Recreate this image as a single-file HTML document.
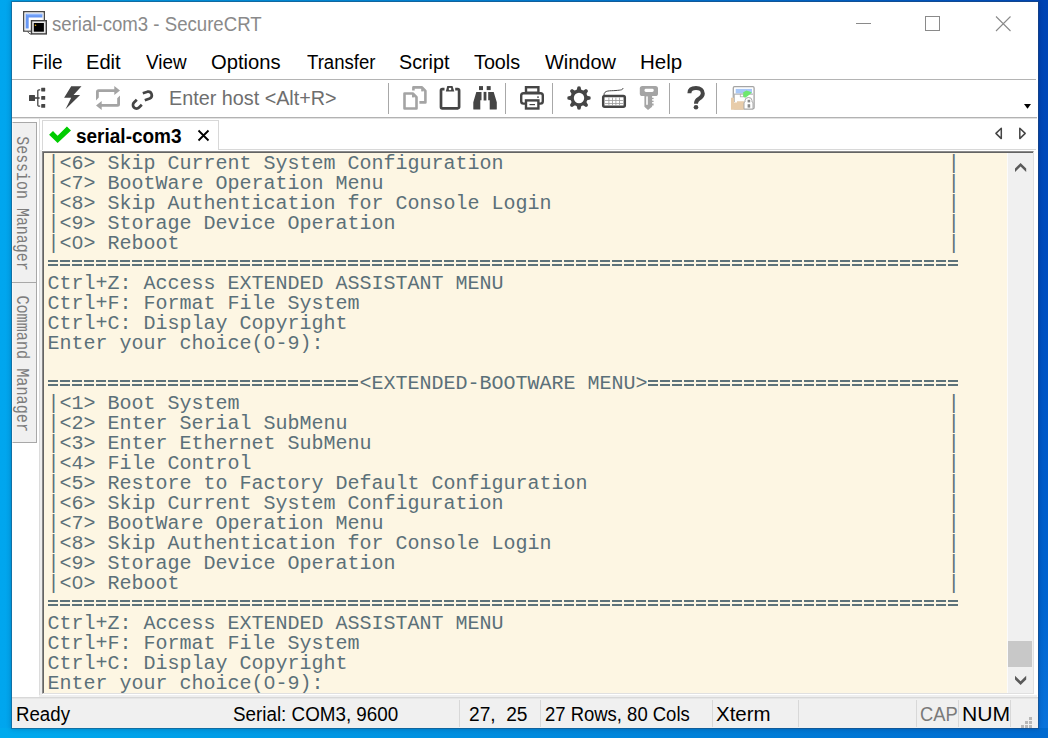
<!DOCTYPE html>
<html><head><meta charset="utf-8">
<style>
html,body{margin:0;padding:0;}
body{width:1048px;height:738px;position:relative;overflow:hidden;
 background:linear-gradient(90deg,#00a6ee 0px,#009ce8 150px,#008ade 450px,#0072d4 750px,#005ac8 950px,#004cbe 1048px);
 font-family:"Liberation Sans",sans-serif;}
.abs{position:absolute;}
#win{position:absolute;left:12px;top:2px;width:1026px;height:726px;background:#fff;overflow:hidden;}
.menu{position:absolute;top:49px;font-size:19px;color:#000;line-height:24px;white-space:nowrap;}
.sep{position:absolute;width:1px;background:#a0a0a0;}
.term{position:absolute;left:47.5px;font-family:"Liberation Mono",monospace;font-size:20px;line-height:20px;color:#5b7079;white-space:pre;}
.tx{position:absolute;line-height:30px;white-space:nowrap;transform-origin:0 0;}
.st{position:absolute;top:702px;font-size:19px;line-height:24px;color:#000;white-space:nowrap;}
.ssep{position:absolute;top:700px;width:1px;height:27px;background:#d8d8d8;}
</style></head>
<body>
<div class="abs" style="left:1038px;top:0;width:10px;height:738px;background:linear-gradient(180deg,#0044b4 0,#004cbe 250px,#0058c8 420px,#0064d0 600px,#0a74dc 738px)"></div>
<div id="desk-bottom" class="abs" style="left:0;top:728px;width:1048px;height:10px;background:linear-gradient(90deg,#00aaee,#0098e4 300px,#0080d8 700px,#006ad0 1048px)"></div>
<!-- window -->
<div class="abs" style="left:12px;top:2px;width:1026px;height:726px;background:#fff;box-shadow:0 0 0 1px rgba(40,70,100,0.42),0 0 5px 1px rgba(0,0,40,0.22);"></div>

<!-- title icon -->
<svg class="abs" style="left:0;top:0" width="60" height="40">
 <rect x="23.7" y="11.7" width="20.6" height="19.4" fill="#fff" stroke="#4a4a4a" stroke-width="1.4"/>
 <rect x="25" y="13" width="18" height="17" fill="none" stroke="#e0e0e0" stroke-width="0.8"/>
 <defs><linearGradient id="bl" x1="0" y1="0" x2="0" y2="1"><stop offset="0" stop-color="#8ab4ff"/><stop offset="1" stop-color="#5a8ef0"/></linearGradient></defs>
 <path d="M25.7 13.7 H42.4 V17.5 H28.7 V28.5 H25.7 Z" fill="#6898f4"/><rect x="26.5" y="14" width="15.5" height="1.2" fill="#90b8ff"/>
 <path d="M27 31.2 L30 34 H31.5" fill="none" stroke="#5a5a5a" stroke-width="1"/>
 <rect x="31.5" y="20.7" width="14.8" height="13.2" fill="#e8e8e8" stroke="#404040" stroke-width="1.4"/>
 <rect x="33.8" y="23" width="10.1" height="8.7" fill="#000"/>
 <circle cx="35.5" cy="25.3" r="0.8" fill="#f0b000"/>
</svg>
<!-- caption buttons -->
<div class="abs" style="left:856px;top:23px;width:15px;height:1px;background:#8a8a8a"></div>
<div class="abs" style="left:925px;top:16px;width:13px;height:13px;border:1px solid #8a8a8a"></div>
<svg class="abs" style="left:994px;top:15px" width="18" height="18"><path d="M2 1.5 L16.5 16 M16.5 1.5 L2 16" stroke="#8a8a8a" stroke-width="1.1"/></svg>

<!-- menu -->
<div class="abs" style="left:12px;top:79px;width:1024px;height:1px;background:#b4b4b4"></div>

<!-- toolbar -->
<svg class="abs" style="left:0;top:80px" width="1048" height="37" viewBox="0 80 1048 37">
 <!-- tree -->
 <g fill="#454545">
  <rect x="29" y="95" width="6" height="6" rx="0.5"/>
  <rect x="35" y="97.2" width="4.6" height="1.6"/>
  <path d="M40.2 89.8 H39 A1.2 1.2 0 0 0 37.8 91 V105 A1.2 1.2 0 0 0 39 106.2 H40.2" fill="none" stroke="#454545" stroke-width="1.3"/>
  <rect x="41.2" y="87.7" width="4" height="3.8" rx="0.4"/>
  <rect x="41.2" y="96" width="4" height="3.8" rx="0.4"/>
  <rect x="41.2" y="104" width="4" height="3.8" rx="0.4"/>
 </g>
 <!-- lightning -->
 <polygon points="71.2,86.3 81.5,86.3 73.5,94.9 80.1,94.9 65.5,109.2 71.2,97.7 64.1,97.7" fill="#454545"/>
 <!-- repeat -->
 <path d="M96 100.4 L98.8 97.6 V92 H114.3 V95 L120 90.5 L114.3 86.1 V89.2 H98.5 Q96 89.2 96 91.7 Z" fill="#a4a4a4"/>
 <path d="M120 95.4 L117.2 98.2 V104 H101.7 V101 L96 105.5 L101.7 109.9 V106.8 H117.5 Q120 106.8 120 104.3 Z" fill="#a4a4a4"/>
 <!-- broken link -->
 <g fill="none" stroke="#454545" stroke-width="2.7">
  <path d="M136.8 99.7 L134 102.5 A3.5 3.5 0 0 0 139 107.5 L141.8 104.7"/>
  <path d="M142.8 93.2 L147.5 91.7 A3.6 3.6 0 0 1 149.7 98.5 L144.8 100.3"/>
 </g>
 <!-- separators -->
 <rect x="388" y="83" width="1" height="31" fill="#a8a8a8"/>
 <rect x="505" y="83" width="1" height="31" fill="#a8a8a8"/>
 <rect x="552" y="83" width="1" height="31" fill="#a8a8a8"/>
 <rect x="669" y="83" width="1" height="31" fill="#a8a8a8"/>
 <rect x="716" y="83" width="1" height="31" fill="#a8a8a8"/>
 <!-- copy -->
 <g fill="none" stroke="#a4a4a4" stroke-width="2.6" stroke-linejoin="round">
  <path d="M413.4 90.4 V87.4 H422 L425.4 90.8 V102.4 H419.4"/>
  <path d="M404.5 93.5 H412.8 L416.5 97.2 V108.5 H404.5 Z"/>
 </g>
 <rect x="412" y="94" width="2.4" height="3.4" fill="#a4a4a4"/>
 <rect x="421.2" y="88" width="2.4" height="3.4" fill="#a4a4a4"/>
 <!-- clipboard -->
 <path d="M444.5 89.1 H442.3 A1.3 1.3 0 0 0 441 90.4 V107 A1.3 1.3 0 0 0 442.3 108.3 H457.8 A1.3 1.3 0 0 0 459.1 107 V90.4 A1.3 1.3 0 0 0 457.8 89.1 H455.2" fill="none" stroke="#454545" stroke-width="2.7"/>
 <polygon points="447.3,86.1 452.5,86.1 454.3,91.6 445.8,91.6" fill="#454545"/>
 <circle cx="450" cy="89" r="1.3" fill="#fff"/>
 <!-- binoculars -->
 <g fill="#454545">
  <rect x="479" y="86.1" width="4" height="4"/>
  <rect x="486.7" y="86.1" width="4" height="4"/>
  <path d="M476.3 91.9 H481.5 V100.2 H480.3 V109.6 H474 Q473.3 109.6 473.3 108.9 V102.3 Z"/>
  <rect x="483.6" y="91.9" width="2.8" height="8.6"/>
  <path d="M488.2 91.9 H493.7 L496.8 102.3 V108.9 Q496.8 109.6 496.1 109.6 H489.7 V100.2 H488.2 Z"/>
 </g>
 <!-- printer -->
 <g fill="none" stroke="#454545" stroke-width="2.4">
  <rect x="526" y="87.2" width="12.4" height="5.5"/>
  <path d="M525 103.6 H523.5 A2.3 2.3 0 0 1 521.2 101.3 V95.5 A2.3 2.3 0 0 1 523.5 93.2 H540.5 A2.3 2.3 0 0 1 542.8 95.5 V101.3 A2.3 2.3 0 0 1 540.5 103.6 H539"/>
  <rect x="526" y="100.4" width="12.4" height="8.1"/>
 </g>
 <rect x="529.5" y="104" width="5.5" height="1.2" fill="#454545"/>
 <rect x="537" y="96.5" width="2" height="1.2" fill="#454545"/>
 <!-- gear -->
 <g transform="translate(579,98)" fill="#454545">
  <circle r="8.5"/>
  <path d="M-2.6 -7 L-1.5 -11.3 Q0 -12.2 1.5 -11.3 L2.6 -7 Z" transform="rotate(0)"/><path d="M-2.6 -7 L-1.5 -11.3 Q0 -12.2 1.5 -11.3 L2.6 -7 Z" transform="rotate(45)"/><path d="M-2.6 -7 L-1.5 -11.3 Q0 -12.2 1.5 -11.3 L2.6 -7 Z" transform="rotate(90)"/><path d="M-2.6 -7 L-1.5 -11.3 Q0 -12.2 1.5 -11.3 L2.6 -7 Z" transform="rotate(135)"/><path d="M-2.6 -7 L-1.5 -11.3 Q0 -12.2 1.5 -11.3 L2.6 -7 Z" transform="rotate(180)"/><path d="M-2.6 -7 L-1.5 -11.3 Q0 -12.2 1.5 -11.3 L2.6 -7 Z" transform="rotate(225)"/><path d="M-2.6 -7 L-1.5 -11.3 Q0 -12.2 1.5 -11.3 L2.6 -7 Z" transform="rotate(270)"/><path d="M-2.6 -7 L-1.5 -11.3 Q0 -12.2 1.5 -11.3 L2.6 -7 Z" transform="rotate(315)"/>
  <circle r="5.2" fill="#fff"/>
 </g>
 <!-- keyboard -->
 <path d="M604 95 C604 90 610 91 616 90.5 C621 90 623 90 622.9 88" fill="none" stroke="#454545" stroke-width="1"/>
 <rect x="603.2" y="96" width="21.6" height="10.8" rx="1.5" fill="none" stroke="#454545" stroke-width="2.5"/>
 <g fill="#9a9a9a">
  <rect x="605" y="100" width="18" height="0.8"/>
  <rect x="605" y="103" width="18" height="0.8"/>
  <rect x="608.5" y="97.5" width="0.8" height="8"/>
  <rect x="612" y="97.5" width="0.8" height="8"/>
  <rect x="615.5" y="97.5" width="0.8" height="8"/>
  <rect x="619" y="97.5" width="0.8" height="8"/>
 </g>
 <!-- key -->
 <g fill="#a4a4a4">
  <rect x="639.8" y="86" width="18.2" height="10" rx="2.6"/>
  <polygon points="644.4,95 652.1,95 652.1,106.8 648,110 644.4,106.8"/>
  <rect x="652" y="97.8" width="1.6" height="1.3"/>
  <rect x="652" y="100.7" width="1.6" height="1.3"/>
  <rect x="652" y="103.5" width="1.6" height="2"/>
 </g>
 <rect x="644.5" y="88.8" width="9.2" height="3.2" rx="1.4" fill="#fff"/>
 <rect x="646.2" y="96.4" width="1.6" height="8.4" fill="#fff"/>
 <!-- question -->
 <path d="M689.4 93.2 C689.4 89.6 692.3 88.1 696 88.1 C700.2 88.1 702.8 90.4 702.8 93.4 C702.8 96.4 700.6 97.7 698.6 99 C696.8 100.2 696 101.4 696 103.7" fill="none" stroke="#454545" stroke-width="4"/>
 <circle cx="696" cy="107.3" r="2.3" fill="#454545"/>
 <!-- last icon -->
 <rect x="733.3" y="86.7" width="20.8" height="22.1" rx="1.2" fill="#fff" stroke="#a4a4a4" stroke-width="1.3"/>
 <rect x="735.7" y="88.9" width="16.3" height="4.6" fill="#a8c8f8"/>
 <rect x="733.5" y="93.6" width="19.5" height="1.1" fill="#b0b0b0"/>
 <rect x="733.5" y="94" width="1.3" height="8" fill="#b4b4b4"/>
 <rect x="740.3" y="94.2" width="3.2" height="2.6" fill="#fff" stroke="#b0b0b0" stroke-width="0.8"/>
 <polygon points="743.2,92.3 746.5,90.6 749.5,91.4 751.8,92.4 748.2,95.8 745.2,97.8 743.4,97" fill="#6ee86e"/>
 <polygon points="731,97.8 734,97.8 734,102.4 737,102.4 737,101.2 744.2,101.2 744.2,109.8 731,109.8" fill="#e8ccaa"/>
 <path d="M744 109 V103 A1 1 0 0 1 745 102 V100.5 A3.5 3 0 0 1 752 100.5 V102 A1 1 0 0 1 753 103 V109 Z" fill="#fff" stroke="#a8a8a8" stroke-width="1"/>
 <rect x="747.6" y="99.8" width="2.6" height="2.6" fill="#8a8a8a"/>
 <rect x="747.6" y="104.2" width="2.6" height="3.4" fill="#8a8a8a"/>
 <!-- dropdown -->
 <polygon points="1024,104 1031,104 1027.5,108.7" fill="#000"/>
</svg>
<div class="abs" style="left:12px;top:117px;width:1025px;height:1px;background:#b2b2b2"></div>
<div class="abs" style="left:12px;top:118px;width:1025px;height:1px;background:#e2e2e2"></div>

<!-- left sidebar -->
<div class="abs" style="left:12px;top:122px;width:25px;height:321px;background:#f0f0f0;border-left:1px solid #f8f8f8;border-right:1px solid #a8a8a8;border-top:1px solid #a8a8a8;border-bottom:1px solid #a8a8a8;box-sizing:border-box"></div>
<div class="abs" style="left:12px;top:282px;width:25px;height:1px;background:#a8a8a8"></div>
<div class="abs" style="left:39px;top:118px;width:1px;height:578px;background:#dcdcdc"></div>
<div class="abs" style="left:40px;top:150px;width:2px;height:545px;background:#eeeeee"></div>
<div class="abs" style="left:0;top:0;transform-origin:0 0;transform:translate(36.5px,136.2px) rotate(90deg) scaleX(0.830);font-family:'Liberation Mono',monospace;font-size:18px;line-height:30px;color:#7c7c7c;white-space:nowrap">Session Manager</div>
<div class="abs" style="left:0;top:0;transform-origin:0 0;transform:translate(36.5px,295.4px) rotate(90deg) scaleX(0.843);font-family:'Liberation Mono',monospace;font-size:18px;line-height:30px;color:#7c7c7c;white-space:nowrap">Command Manager</div>

<!-- tab row -->
<div class="abs" style="left:42px;top:120px;width:177px;height:30px;border:1px solid #d8d8d8;border-bottom:none;box-sizing:border-box;background:#fff"></div>
<div class="abs" style="left:218px;top:149px;width:818px;height:1px;background:#d8d8d8"></div>
<svg class="abs" style="left:0;top:0" width="80" height="150"><polygon points="49.1,134.7 53,131 57.6,135.7 66.9,126.4 71,130.5 57.6,143.1" fill="#00cc00"/></svg>
<svg class="abs" style="left:196px;top:128px" width="16" height="16"><path d="M2.5 2.5 L12.5 12.5 M12.5 2.5 L2.5 12.5" stroke="#000" stroke-width="1.8"/></svg>
<svg class="abs" style="left:0;top:0" width="1040" height="150">
 <polygon points="1001.3,128.3 1001.3,138.6 995.9,133.4" fill="none" stroke="#454545" stroke-width="1.5" stroke-linejoin="round"/>
 <polygon points="1019.8,128.3 1019.8,138.6 1025.2,133.4" fill="none" stroke="#454545" stroke-width="1.5" stroke-linejoin="round"/>
</svg>

<!-- terminal frame -->
<div class="abs" style="left:42px;top:151px;width:992px;height:543px;box-sizing:border-box;border-left:1px solid #8a8a8a;border-top:1px solid #8a8a8a;border-right:1px solid #e0e0e0;border-bottom:1px solid #e0e0e0;"></div>
<div class="abs" style="left:43px;top:152px;width:990px;height:541px;box-sizing:border-box;border-left:1px solid #646464;border-top:1px solid #646464;background:#fdf6e3"></div>
<!-- scrollbar -->
<div class="abs" style="left:1008px;top:153px;width:25px;height:540px;background:#f0f0f0"></div>
<div class="abs" style="left:1008px;top:641px;width:24px;height:26px;background:#c8c8c8"></div>
<div class="abs" style="left:1007px;top:153px;width:1px;height:540px;background:#fbfbfb"></div>
<svg class="abs" style="left:0;top:0" width="1040" height="700">
 <polygon points="1015,168.4 1020.6,163 1026.2,168.4 1026.2,172 1020.6,166.6 1015,172" fill="#5a5a5a"/>
 <polygon points="1015,675.8 1020.6,681.2 1026.2,675.8 1026.2,679.4 1020.6,685 1015,679.4" fill="#5a5a5a"/>
</svg>

<!-- terminal text -->
<div id="term">
<div class="term" style="top:154px">|&lt;6&gt; Skip Current System Configuration                                     |
|&lt;7&gt; BootWare Operation Menu                                               |
|&lt;8&gt; Skip Authentication for Console Login                                 |
|&lt;9&gt; Storage Device Operation                                              |
|&lt;0&gt; Reboot                                                                |
                                                                            
Ctrl+Z: Access EXTENDED ASSISTANT MENU
Ctrl+F: Format File System
Ctrl+C: Display Copyright
Enter your choice(0-9):

                          &lt;EXTENDED-BOOTWARE MENU&gt;                          
|&lt;1&gt; Boot System                                                           |
|&lt;2&gt; Enter Serial SubMenu                                                  |
|&lt;3&gt; Enter Ethernet SubMenu                                                |
|&lt;4&gt; File Control                                                          |
|&lt;5&gt; Restore to Factory Default Configuration                              |
|&lt;6&gt; Skip Current System Configuration                                     |
|&lt;7&gt; BootWare Operation Menu                                               |
|&lt;8&gt; Skip Authentication for Console Login                                 |
|&lt;9&gt; Storage Device Operation                                              |
|&lt;0&gt; Reboot                                                                |
                                                                            
Ctrl+Z: Access EXTENDED ASSISTANT MENU
Ctrl+F: Format File System
Ctrl+C: Display Copyright
Enter your choice(0-9):</div>
</div>

<style>.eq{position:absolute;height:20px;background-image:linear-gradient(90deg,#fdf6e3 0,#fdf6e3 1px,transparent 1px,transparent 11px,#fdf6e3 11px),linear-gradient(#fdf6e3 0,#fdf6e3 6px,#5d7279 6px,#5d7279 8px,#fdf6e3 8px,#fdf6e3 10px,#5d7279 10px,#5d7279 12px,#fdf6e3 12px);background-size:12px 20px;}</style>
<div class="eq" style="left:47px;top:254px;width:912px"></div>
<div class="eq" style="left:47px;top:374px;width:312px"></div>
<div class="eq" style="left:647px;top:374px;width:312px"></div>
<div class="eq" style="left:47px;top:594px;width:912px"></div>
<div class="abs" style="left:75px;top:241px;width:4px;height:3px;background:#fdf6e3"></div>
<div class="abs" style="left:267px;top:341px;width:4px;height:3px;background:#fdf6e3"></div>
<div class="abs" style="left:75px;top:581px;width:4px;height:3px;background:#fdf6e3"></div>
<div class="abs" style="left:267px;top:681px;width:4px;height:3px;background:#fdf6e3"></div>
<!-- status bar -->
<div class="abs" style="left:39px;top:695px;width:998px;height:2px;background:#efefef"></div>
<div class="abs" style="left:12px;top:697px;width:1026px;height:1px;background:#d8d8d8"></div>
<div class="abs" style="left:12px;top:698px;width:1026px;height:1px;background:#e6e6e6"></div>
<div class="abs" style="left:12px;top:699px;width:1026px;height:29px;background:#f0f0f0"></div>
<div class="ssep" style="left:459px"></div>
<div class="ssep" style="left:540px"></div>
<div class="ssep" style="left:712px"></div>
<div class="ssep" style="left:798px"></div>
<div class="ssep" style="left:916px"></div>
<div class="ssep" style="left:958px"></div>
<div class="ssep" style="left:1010px"></div>
<svg class="abs" style="left:1020px;top:714px" width="14" height="14" fill="#b8b8b8">
 <rect x="9" y="3" width="3" height="3"/>
 <rect x="5" y="7" width="3" height="3"/><rect x="9" y="7" width="3" height="3"/>
 <rect x="1" y="11" width="3" height="3"/><rect x="5" y="11" width="3" height="3"/><rect x="9" y="11" width="3" height="3"/>
</svg>
<!-- texts -->
<div class="tx" style="left:51.95px;top:9.00px;font-size:19.5px;font-weight:normal;color:#8a8a8a;transform:scaleX(0.9546)">serial-com3 - SecureCRT</div>
<div class="tx" style="left:31.66px;top:47.00px;font-size:19.5px;font-weight:normal;color:#000;transform:scaleX(0.9690)">File</div>
<div class="tx" style="left:85.94px;top:47.00px;font-size:19.5px;font-weight:normal;color:#000;transform:scaleX(1.0312)">Edit</div>
<div class="tx" style="left:146.40px;top:47.00px;font-size:19.5px;font-weight:normal;color:#000;transform:scaleX(0.9690)">View</div>
<div class="tx" style="left:211.27px;top:47.00px;font-size:19.5px;font-weight:normal;color:#000;transform:scaleX(1.0348)">Options</div>
<div class="tx" style="left:306.50px;top:47.00px;font-size:19.5px;font-weight:normal;color:#000;transform:scaleX(0.9514)">Transfer</div>
<div class="tx" style="left:398.99px;top:47.00px;font-size:19.5px;font-weight:normal;color:#000;transform:scaleX(1.0122)">Script</div>
<div class="tx" style="left:474.40px;top:47.00px;font-size:19.5px;font-weight:normal;color:#000;transform:scaleX(1.0133)">Tools</div>
<div class="tx" style="left:545.00px;top:47.00px;font-size:19.5px;font-weight:normal;color:#000;transform:scaleX(1.0232)">Window</div>
<div class="tx" style="left:640.20px;top:47.00px;font-size:19.5px;font-weight:normal;color:#000;transform:scaleX(1.0514)">Help</div>
<div class="tx" style="left:168.97px;top:83.00px;font-size:19.5px;font-weight:normal;color:#6e6e6e;transform:scaleX(1.0141)">Enter host &lt;Alt+R&gt;</div>
<div class="tx" style="left:75.55px;top:120.60px;font-size:20px;font-weight:bold;color:#000;transform:scaleX(0.9495)">serial-com3</div>
<div class="tx" style="left:15.89px;top:699.00px;font-size:19.5px;font-weight:normal;color:#000;transform:scaleX(0.9574)">Ready</div>
<div class="tx" style="left:233.24px;top:699.00px;font-size:19.5px;font-weight:normal;color:#000;transform:scaleX(0.9647)">Serial: COM3, 9600</div>
<div class="tx" style="left:468.72px;top:699.00px;font-size:19.5px;font-weight:normal;color:#000;transform:scaleX(0.9810)">27,  25</div>
<div class="tx" style="left:544.85px;top:699.00px;font-size:19.5px;font-weight:normal;color:#000;transform:scaleX(0.9470)">27 Rows, 80 Cols</div>
<div class="tx" style="left:715.95px;top:699.00px;font-size:19.5px;font-weight:normal;color:#000;transform:scaleX(1.0500)">Xterm</div>
<div class="tx" style="left:919.86px;top:699.00px;font-size:19.5px;font-weight:normal;color:#7a7a7a;transform:scaleX(0.9395)">CAP</div>
<div class="tx" style="left:961.83px;top:699.00px;font-size:19.5px;font-weight:normal;color:#000;transform:scaleX(1.0829)">NUM</div>
</body></html>
